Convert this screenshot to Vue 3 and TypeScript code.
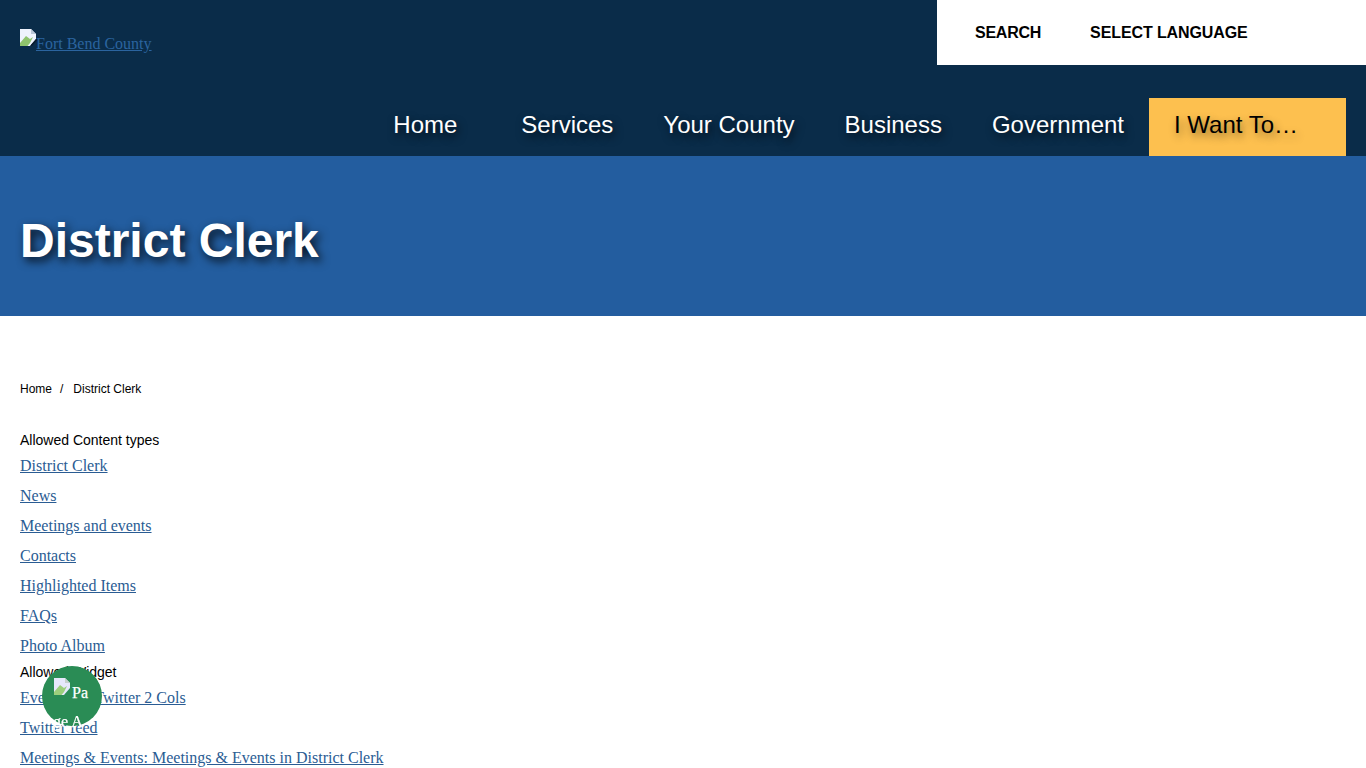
<script setup lang="ts">
const navItems: { label: string; cls: string }[] = [
  { label: 'Home', cls: 'w-home' },
  { label: 'Services', cls: '' },
  { label: 'Your County', cls: '' },
  { label: 'Business', cls: '' },
  { label: 'Government', cls: '' },
  { label: 'I Want To…', cls: 'cta' },
]
const contentTypes: string[] = ['District Clerk', 'News', 'Meetings and events', 'Contacts', 'Highlighted Items', 'FAQs', 'Photo Album']
const widgets: string[] = ['Events and Twitter 2 Cols', 'Twitter feed', 'Meetings & Events: Meetings & Events in District Clerk']
</script>

<template>
  <div class="page">
    <header class="header">
      <div class="top">
        <a class="logo" href="#">
          <svg class="broken" width="17" height="17" viewBox="0 0 17 17">
            <path d="M0 0H11L16 5V10L10 17H0Z" fill="#eef3fd" />
            <path d="M0 14L6 7L10 10L13 8L10 14L7.5 17H0Z" fill="#8fc46e" />
            <path d="M11 0V5H16Z" fill="#b9c6d6" />
            <path d="M11 17L17 10" stroke="#0a1b2c" stroke-width="1.5" />
          </svg><span>Fort Bend County</span>
        </a>
        <div class="tools">
          <span class="tool tool-search">SEARCH</span>
          <span class="tool">SELECT LANGUAGE</span>
        </div>
      </div>
      <nav class="nav">
        <a v-for="item in navItems" :key="item.label" class="nav-item" :class="item.cls" href="#">{{ item.label }}</a>
      </nav>
    </header>

    <section class="hero">
      <h1>District Clerk</h1>
    </section>

    <main class="main">
      <div class="crumbs"><span>Home</span><span class="sep">/</span><span>District Clerk</span></div>
      <div class="label first">Allowed Content types</div>
      <ul class="links">
        <li v-for="t in contentTypes" :key="t"><a href="#">{{ t }}</a></li>
      </ul>
      <div class="label second">Allowed Widget</div>
      <ul class="links">
        <li v-for="w in widgets" :key="w"><a href="#">{{ w }}</a></li>
      </ul>
    </main>

    <div class="fab">
      <svg class="fab-img" width="17" height="17" viewBox="0 0 17 17">
        <path d="M0 0H11L16 5V10L10 17H0Z" fill="#e6e8fb" />
        <path d="M0 14L6 7L10 10L13 8L10 14L7.5 17H0Z" fill="#9ccf7c" />
        <path d="M11 0V5H16Z" fill="#c6d0cc" />
      </svg>
      <span class="fab-a">Pa</span>
      <span class="fab-b">ge A</span>
    </div>
  </div>
</template>

<style>
html, body { margin: 0; padding: 0; background: #fff; }
</style>

<style scoped>
.page {
  height: 768px;
  overflow: hidden;
  font-family: "Liberation Sans", Arial, sans-serif;
  color: #000;
}
.header {
  background: #0a2c49;
  height: 156px;
  display: flex;
  flex-direction: column;
}
.top {
  display: flex;
  justify-content: space-between;
  height: 98px;
}
.logo {
  display: flex;
  align-items: flex-start;
  margin: 28px 0 0 20px;
  height: 24px;
  font-family: "Liberation Serif", "Times New Roman", serif;
  font-size: 16px;
  color: #2b649f;
  text-decoration: underline;
}
.logo span { margin-top: 7px; line-height: 18px; margin-left: -1px; }
.broken { display: block; margin-top: 1px; }
.tools {
  width: 429px;
  height: 65px;
  background: #fff;
  display: flex;
  align-items: flex-start;
  box-sizing: border-box;
  padding: 24px 0 0 38px;
  font-size: 16px;
  font-weight: 700;
  line-height: 18px;
  letter-spacing: -0.1px;
  color: #000;
}
.tool-search { margin-right: 49px; letter-spacing: -0.25px; }
.nav {
  display: flex;
  justify-content: flex-end;
  padding-right: 20px;
  height: 58px;
}
.nav-item {
  padding: 0 25px;
  font-size: 24px;
  line-height: 54px;
  color: #fff;
  text-decoration: none;
  text-shadow: 2px 4px 8px rgba(0, 0, 0, 0.7);
  box-sizing: border-box;
}
.w-home { width: 128px; }
.cta {
  width: 197px;
  background: #fdc04f;
  color: #000;
  text-shadow: 2px 4px 8px rgba(0, 0, 0, 0.45);
}
.hero {
  background: #235d9f;
  height: 160px;
  box-sizing: border-box;
  padding: 0 20px;
  display: flex;
  align-items: center;
}
.hero h1 {
  margin: 10px 0 0;
  font-size: 48px;
  line-height: 56px;
  font-weight: 700;
  color: #fff;
  text-shadow: 3px 4px 10px rgba(0, 0, 0, 0.85);
}
.main { padding: 66px 20px 0; }
.crumbs {
  font-size: 12px;
  line-height: 14px;
  display: flex;
}
.sep { margin: 0 10px 0 8px; }
.label {
  font-size: 14px;
  line-height: 16px;
}
.first { margin-top: 36px; }
.second { margin-top: -2px; }
.links {
  list-style: none;
  margin: 8px 0 0;
  padding: 0;
  font-family: "Liberation Serif", "Times New Roman", serif;
  font-size: 16px;
}
.links li { height: 30px; line-height: 20px; }
.links a { color: #2a5c93; text-decoration: underline; }
.fab {
  position: fixed;
  left: 42px;
  top: 666px;
  width: 60px;
  height: 60px;
  border-radius: 50%;
  background: #2a8c55;
  font-family: "Liberation Serif", "Times New Roman", serif;
  font-size: 16px;
  color: #fff;
}
.fab-img { position: absolute; left: 12px; top: 12px; }
.fab-a { position: absolute; left: 30px; top: 18px; line-height: 18px; -webkit-text-stroke: 0.25px #fff; }
.fab-b { position: absolute; left: 11px; top: 47px; line-height: 18px; -webkit-text-stroke: 0.25px #fff; }
</style>
